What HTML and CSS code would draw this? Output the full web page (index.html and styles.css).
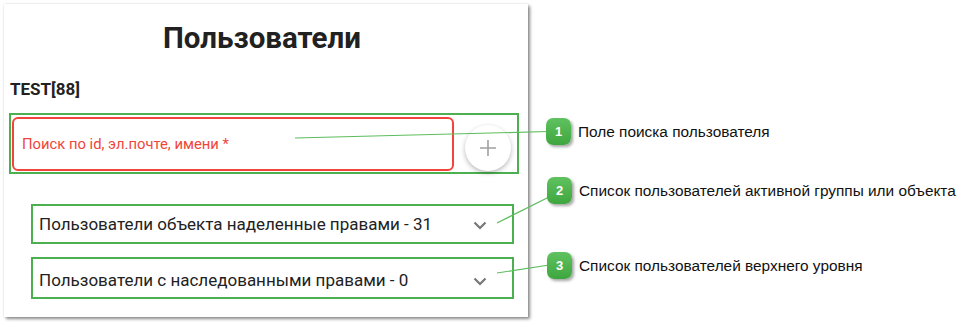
FILE: index.html
```html
<!DOCTYPE html>
<html lang="ru">
<head>
    <meta charset="UTF-8">
    <title>Пользователи</title>
    <link rel="stylesheet" href="styles.css">
</head>
<body>
    <div class="panel">
        <h1 class="title">Пользователи</h1>
        <div class="group-name">TEST[88]</div>

        <div class="mark search-row">
            <div class="search-field">Поиск по id, эл.почте, имени *</div>
            <button class="add-btn" aria-label="Добавить">
                <svg width="18" height="18" viewBox="0 0 18 18">
                    <path d="M9 1v16M1 9h16" stroke="#a0a0a0" stroke-width="1.6" fill="none"/>
                </svg>
            </button>
        </div>

        <div class="mark section first">
            <span>Пользователи объекта наделенные правами - 31</span>
            <svg class="chevron" width="14" height="9" viewBox="0 0 14 9">
                <polyline points="1.5,1.5 7,7 12.5,1.5" stroke="#777" stroke-width="2.2" fill="none"/>
            </svg>
        </div>
        <div class="mark section second">
            <span>Пользователи с наследованными правами - 0</span>
            <svg class="chevron" width="14" height="9" viewBox="0 0 14 9">
                <polyline points="1.5,1.5 7,7 12.5,1.5" stroke="#777" stroke-width="2.2" fill="none"/>
            </svg>
        </div>
    </div>

    <!-- пояснения -->
    <svg class="leaders" width="973" height="327">
        <line x1="295" y1="138" x2="548" y2="131.5"/>
        <line x1="497" y1="223" x2="549" y2="197"/>
        <line x1="497" y1="273" x2="549" y2="265"/>
    </svg>
    <div class="callout c1"><span class="badge">1</span>Поле поиска пользователя</div>
    <div class="callout c2"><span class="badge">2</span>Список пользователей активной группы или объекта</div>
    <div class="callout c3"><span class="badge">3</span>Список пользователей верхнего уровня</div>
</body>
</html>
```

FILE: styles.css
```css
body {
    margin: 0;
    width: 973px;
    height: 327px;
    background: #fff;
    position: relative;
    overflow: hidden;
    font-family: Roboto, "Liberation Sans", sans-serif;
}
.panel {
    box-sizing: border-box;
    margin: 4px 0 0 4px;
    width: 524px;
    height: 313px;
    padding-top: 14px;
    background: #fff;
    box-shadow: 2px 2px 3px rgba(0, 0, 0, 0.45), 0 0 2px rgba(0, 0, 0, 0.12);
}
.title {
    margin: 0;
    font-size: 29.5px;
    font-weight: 700;
    line-height: 40px;
    text-align: center;
    color: #212121;
    padding-right: 8px;
}
.group-name {
    margin: 21px 0 0 6px;
    font-size: 17px;
    font-weight: 700;
    line-height: 20px;
    color: #212121;
}
.mark {
    box-sizing: border-box;
    border: 2px solid #4cb050;
}
.search-row {
    display: flex;
    align-items: flex-start;
    margin: 14px 0 0 5px;
    width: 510px;
    height: 61px;
    padding: 2px 0 0 1px;
}
.search-field {
    box-sizing: border-box;
    display: flex;
    align-items: center;
    width: 442px;
    height: 54px;
    padding-left: 8px;
    border: 2px solid #f0453a;
    border-radius: 6px;
    font-size: 14.8px;
    color: #f0453a;
}
.add-btn {
    display: flex;
    align-items: center;
    justify-content: center;
    width: 46px;
    height: 46px;
    margin: 8px 0 0 11px;
    padding: 0;
    border: none;
    border-radius: 50%;
    background: #fff;
    box-shadow: 0 2px 5px rgba(0, 0, 0, 0.28);
}
.section {
    display: flex;
    align-items: center;
    justify-content: space-between;
    margin-left: 27px;
    width: 483px;
    padding: 0 25px 0 6px;
    font-size: 17px;
    color: #222;
}
.section.first {
    margin-top: 30px;
    height: 40px;
}
.section.second {
    margin-top: 13px;
    height: 42px;
    padding-top: 3px;
}
.chevron {
    margin-top: 3px;
}
.leaders {
    position: absolute;
    left: 0;
    top: 0;
}
.leaders line {
    stroke: #5cbd5c;
    stroke-width: 1.2;
}
.callout {
    position: absolute;
    display: flex;
    align-items: center;
    gap: 7px;
    font-family: "Liberation Sans", Arial, sans-serif;
    font-size: 15.4px;
    color: #111;
    white-space: nowrap;
}
.c1 { left: 546px; top: 118px; }
.c2 { left: 547px; top: 177px; }
.c3 { left: 547px; top: 252px; }
.badge {
    display: flex;
    align-items: center;
    justify-content: center;
    width: 25px;
    height: 27px;
    border-radius: 7px;
    background: linear-gradient(#5fc25f, #3fa63f);
    box-shadow: 2px 2px 3px rgba(0, 0, 0, 0.35);
    color: #fff;
    font-size: 13px;
    font-weight: 700;
}
```
